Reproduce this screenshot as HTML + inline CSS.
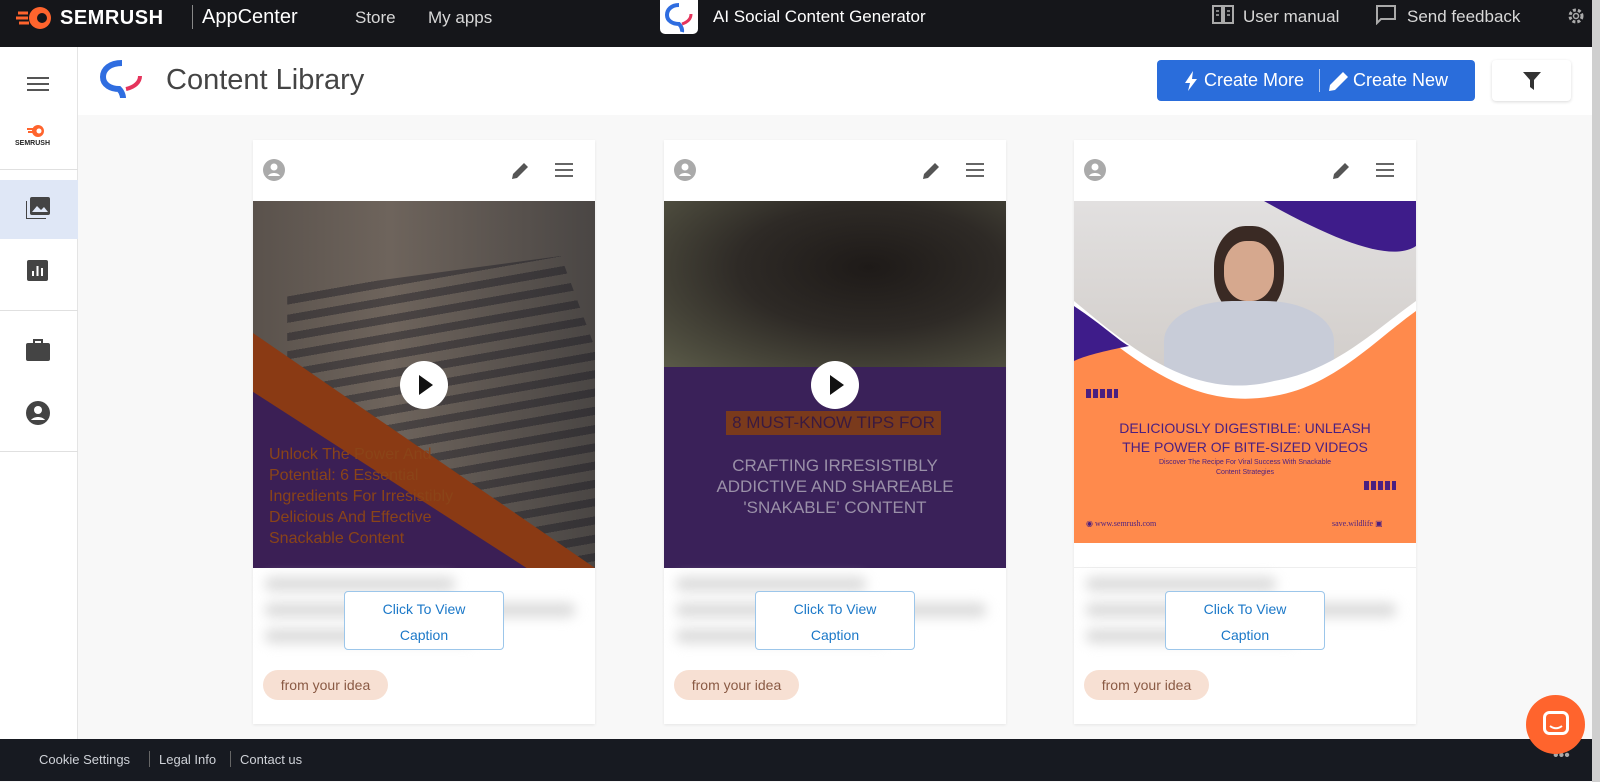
<!DOCTYPE html>
<html><head><meta charset="utf-8"><style>
*{box-sizing:border-box;margin:0;padding:0}
body{width:1600px;height:782px;overflow:hidden;background:#f8f8f8;font-family:"Liberation Sans",sans-serif;position:relative}
.abs{position:absolute}
.top{left:0;top:0;width:1600px;height:47px;background:#15161a;color:#d8d8d8}
.side{left:0;top:47px;width:78px;height:692px;background:#fff;border-right:1px solid #e4e4e4}
.hdr{left:78px;top:47px;width:1514px;height:68px;background:#fff}
.card{top:140px;width:342px;height:584px;background:#fff;box-shadow:0 1px 3px rgba(0,0,0,.08)}
.img{position:absolute;left:0;top:61px;width:342px;height:367px;overflow:hidden}
.btn{position:absolute;left:91px;top:451px;width:160px;height:59px;border:1px solid #9cc6ea;border-radius:4px;background:#fff;color:#1b78c8;font-size:14px;text-align:center;line-height:26px;padding-top:4px}
.chip{position:absolute;left:10px;top:530px;width:125px;height:30px;border-radius:15px;background:#f7e0d3;color:#8a5a44;font-size:14px;line-height:30px;text-align:center}
.blur{position:absolute;left:12px;height:14px;background:#dadada;filter:blur(6px);border-radius:6px}
.foot{left:0;top:739px;width:1592px;height:42px;background:#171a21;color:#cfd2d8;font-size:13px}
</style></head><body>
<div class="abs top">
 <svg class="abs" style="left:16px;top:5px" width="38" height="26" viewBox="0 0 38 26"><path d="M2 8h10M0 13h12M3 18h10" stroke="#ff642d" stroke-width="3"/><circle cx="24" cy="13" r="11" fill="#ff642d"/><circle cx="26" cy="13" r="5" fill="#15161a"/></svg>
 <div class="abs" style="left:60px;top:7px;font-size:20px;font-weight:bold;color:#fff;letter-spacing:.5px">SEMRUSH</div>
 <div class="abs" style="left:192px;top:5px;width:1px;height:24px;background:#888"></div>
 <div class="abs" style="left:202px;top:6px;font-size:20px;color:#fff">AppCenter</div>
 <div class="abs" style="left:355px;top:8px;font-size:17px">Store</div>
 <div class="abs" style="left:428px;top:8px;font-size:17px">My apps</div>
 <div class="abs" style="left:660px;top:0;width:38px;height:34px;background:#fff;border-radius:0 0 5px 5px"><svg width="38" height="34" viewBox="0 0 38 34"><path d="M19 5c-8 0-12 5-12 10 0 6 6 9 12 9 4 4 3 8 3 8" fill="none" stroke="#2f6de0" stroke-width="4"/><path d="M22 24c6-2 9-5 9-10" stroke="#e5345c" stroke-width="3" fill="none"/></svg></div>
 <div class="abs" style="left:713px;top:7px;font-size:17px;color:#fff">AI Social Content Generator</div>
 <svg class="abs" style="left:1212px;top:5px" width="22" height="20" viewBox="0 0 22 20"><path d="M1 1h9v17H1zM12 1h9v17h-9z" fill="none" stroke="#aaa" stroke-width="2"/><path d="M4 6h3M15 6h3M4 10h3M15 10h3" stroke="#aaa" stroke-width="1.5"/></svg>
 <div class="abs" style="left:1243px;top:7px;font-size:17px">User manual</div>
 <svg class="abs" style="left:1376px;top:5px" width="20" height="20" viewBox="0 0 20 20"><path d="M1 1h18v13H5l-4 4z" fill="none" stroke="#aaa" stroke-width="2"/></svg>
 <div class="abs" style="left:1407px;top:7px;font-size:17px">Send feedback</div>
 <svg class="abs" style="left:1566px;top:6px" width="20" height="20" viewBox="0 0 20 20"><circle cx="10" cy="10" r="6" fill="none" stroke="#aaa" stroke-width="3" stroke-dasharray="3 2"/><circle cx="10" cy="10" r="2.5" fill="none" stroke="#aaa" stroke-width="1.5"/></svg>
</div>
<div class="abs" style="left:1592px;top:0;width:8px;height:782px;background:#cfcfcf"></div>
<div class="abs side">
 <div class="abs" style="left:27px;top:30px;width:22px;height:2px;background:#555;box-shadow:0 6px #555,0 12px #555"></div>
 <svg class="abs" style="left:27px;top:78px" width="18" height="13" viewBox="0 0 18 13"><path d="M0 4h6M1 7h6" stroke="#ff642d" stroke-width="2"/><circle cx="11" cy="6" r="6" fill="#ff642d"/><circle cx="12" cy="6" r="2.5" fill="#fff"/></svg>
 <div class="abs" style="left:15px;top:93px;font-size:7px;font-weight:bold;color:#222">SEMRUSH</div>
 <div class="abs" style="left:0;top:122px;width:78px;height:1px;background:#e0e0e0"></div>
 <div class="abs" style="left:0;top:133px;width:78px;height:59px;background:#dfe7f6"></div>
 <svg class="abs" style="left:26px;top:150px" width="24" height="22" viewBox="0 0 24 22"><path d="M0 4v18h20" fill="none" stroke="#444" stroke-width="2"/><rect x="4" y="0" width="20" height="18" rx="2" fill="#444"/><path d="M6 15l5-6 4 4 3-3 4 5z" fill="#dfe7f6"/></svg>
 <svg class="abs" style="left:27px;top:213px" width="21" height="21" viewBox="0 0 21 21"><rect width="21" height="21" rx="2" fill="#444"/><path d="M6 16v-5M10.5 16V6M15 16v-8" stroke="#fff" stroke-width="2"/></svg>
 <div class="abs" style="left:0;top:263px;width:78px;height:1px;background:#e0e0e0"></div>
 <svg class="abs" style="left:26px;top:292px" width="24" height="22" viewBox="0 0 24 22"><path d="M8 4V1h8v3" fill="none" stroke="#444" stroke-width="2"/><rect y="4" width="24" height="18" rx="2" fill="#444"/></svg>
 <svg class="abs" style="left:26px;top:354px" width="24" height="24" viewBox="0 0 24 24"><circle cx="12" cy="12" r="12" fill="#444"/><circle cx="12" cy="9" r="4" fill="#fff"/><path d="M5 19c3-4 11-4 14 0" fill="#fff"/></svg>
 <div class="abs" style="left:0;top:404px;width:78px;height:1px;background:#e0e0e0"></div>
</div>
<div class="abs hdr">
 <svg class="abs" style="left:20px;top:12px" width="48" height="40" viewBox="0 0 48 40"><path d="M24 4C12 4 5 10 5 18c0 8 8 12 16 12 4 4 4 9 4 9" fill="none" stroke="#2f6de0" stroke-width="6"/><path d="M28 30c9-2 14-7 14-13" fill="none" stroke="#e5345c" stroke-width="4"/></svg>
 <div class="abs" style="left:88px;top:17px;font-size:29px;color:#444">Content Library</div>
 <div class="abs" style="left:1079px;top:13px;width:318px;height:41px;background:#2a6ddb;border-radius:4px;color:#fff;font-size:18px;line-height:41px">
  <svg class="abs" style="left:28px;top:11px" width="12" height="20" viewBox="0 0 12 20"><path d="M8 0L0 12h5l-2 8 9-12H7z" fill="#fff"/></svg><span class="abs" style="left:47px">Create More</span>
  <span class="abs" style="left:162px;top:9px;width:1px;height:23px;background:#a9c4f0"></span>
  <svg class="abs" style="left:172px;top:11px" width="20" height="20" viewBox="0 0 20 20"><path d="M0 20l1-6L14 1l5 5L6 19z" fill="#fff"/></svg><span class="abs" style="left:196px">Create New</span></div>
 <div class="abs" style="left:1414px;top:13px;width:79px;height:41px;background:#fff;border-radius:4px;box-shadow:0 1px 3px rgba(0,0,0,.15)"><svg class="abs" style="left:31px;top:12px" width="18" height="18" viewBox="0 0 18 18"><path d="M0 0h18L11 8v10l-4-3V8z" fill="#333"/></svg></div>
</div>

<div class="abs card" style="left:253px">
 <svg class="abs" style="left:10px;top:19px" width="22" height="22" viewBox="0 0 22 22"><circle cx="11" cy="11" r="11" fill="#aaa"/><circle cx="11" cy="8" r="3.5" fill="#fff"/><path d="M5 17c2-4 10-4 12 0" fill="#fff"/></svg>
 <svg class="abs" style="left:259px;top:21px" width="18" height="18" viewBox="0 0 18 18"><path d="M0 18l1-5L12 2l4 4L5 17z" fill="#555"/></svg>
 <div class="abs" style="left:302px;top:23px;width:18px;height:2px;background:#666;box-shadow:0 6px #666,0 12px #666"></div>
 <div class="img" style="background:linear-gradient(90deg,#5a524c,#6e645c 40%,#4a4644)">
  <div class="abs" style="left:0;top:0;width:342px;height:367px;background:repeating-linear-gradient(170deg,transparent 0 10px,rgba(20,20,30,.4) 10px 18px);clip-path:polygon(10% 25%,90% 15%,100% 40%,100% 100%,10% 100%)"></div>
  <div class="abs" style="left:0;top:0;width:342px;height:367px;background:#3b1f55;clip-path:polygon(0 42%,100% 100%,0 100%)"></div>
  <div class="abs" style="left:0;top:0;width:342px;height:367px;background:#8a3a14;clip-path:polygon(0 36%,0 52%,80% 100%,100% 100%)"></div>
  <div class="abs" style="left:16px;top:243px;font-size:16px;line-height:21px;color:#8a4418;width:230px">Unlock The Power And Potential: 6 Essential Ingredients For Irresistibly Delicious And Effective Snackable Content</div>
  <div class="abs" style="left:147px;top:160px;width:48px;height:48px;border-radius:50%;background:#fff"><div class="abs" style="left:19px;top:14px;border-left:14px solid #111;border-top:10px solid transparent;border-bottom:10px solid transparent"></div></div>
 </div>
 <div class="blur" style="top:437px;width:190px"></div><div class="blur" style="top:463px;width:310px"></div><div class="blur" style="top:489px;width:210px"></div>
 <div class="btn">Click To View<br>Caption</div><div class="chip">from your idea</div>
</div>

<div class="abs card" style="left:664px">
 <svg class="abs" style="left:10px;top:19px" width="22" height="22" viewBox="0 0 22 22"><circle cx="11" cy="11" r="11" fill="#aaa"/><circle cx="11" cy="8" r="3.5" fill="#fff"/><path d="M5 17c2-4 10-4 12 0" fill="#fff"/></svg>
 <svg class="abs" style="left:259px;top:21px" width="18" height="18" viewBox="0 0 18 18"><path d="M0 18l1-5L12 2l4 4L5 17z" fill="#555"/></svg>
 <div class="abs" style="left:302px;top:23px;width:18px;height:2px;background:#666;box-shadow:0 6px #666,0 12px #666"></div>
 <div class="img" style="background:#3a2159">
  <div class="abs" style="left:0;top:0;width:342px;height:166px;background:radial-gradient(ellipse at 60% 40%,#1e1a18,#2e2a26 45%,#5a5a48)"></div>
  <div class="abs" style="left:62px;top:210px;width:215px;height:24px;background:#7a3a1c;color:#3a1a40;font-size:17px;text-align:center;line-height:24px">8 MUST-KNOW TIPS FOR</div>
  <div class="abs" style="left:50px;top:254px;width:242px;font-size:17px;line-height:21px;color:#9a90a8;text-align:center">CRAFTING IRRESISTIBLY ADDICTIVE AND SHAREABLE 'SNAKABLE' CONTENT</div>
  <div class="abs" style="left:147px;top:160px;width:48px;height:48px;border-radius:50%;background:#fff"><div class="abs" style="left:19px;top:14px;border-left:14px solid #111;border-top:10px solid transparent;border-bottom:10px solid transparent"></div></div>
 </div>
 <div class="blur" style="top:437px;width:190px"></div><div class="blur" style="top:463px;width:310px"></div><div class="blur" style="top:489px;width:210px"></div>
 <div class="btn">Click To View<br>Caption</div><div class="chip">from your idea</div>
</div>

<div class="abs card" style="left:1074px">
 <svg class="abs" style="left:10px;top:19px" width="22" height="22" viewBox="0 0 22 22"><circle cx="11" cy="11" r="11" fill="#aaa"/><circle cx="11" cy="8" r="3.5" fill="#fff"/><path d="M5 17c2-4 10-4 12 0" fill="#fff"/></svg>
 <svg class="abs" style="left:259px;top:21px" width="18" height="18" viewBox="0 0 18 18"><path d="M0 18l1-5L12 2l4 4L5 17z" fill="#555"/></svg>
 <div class="abs" style="left:302px;top:23px;width:18px;height:2px;background:#666;box-shadow:0 6px #666,0 12px #666"></div>
 <div class="img" style="height:342px;background:#ff8a4c">
  <div class="abs" style="left:0;top:0;width:342px;height:200px;background:linear-gradient(180deg,#e2e0e0,#cfcac6)"></div>
  <div class="abs" style="left:140px;top:25px;width:70px;height:90px;border-radius:45%;background:#3a2a24"></div>
  <div class="abs" style="left:150px;top:40px;width:50px;height:60px;border-radius:45%;background:#d6a88e"></div>
  <div class="abs" style="left:90px;top:100px;width:170px;height:100px;border-radius:40% 40% 0 0;background:#c8ccd8"></div>
  <svg class="abs" style="left:0;top:0" width="342" height="342" viewBox="0 0 342 342"><path d="M190 0H342V45C320 60 270 45 190 0Z" fill="#3e1c8a"/><path d="M0 100C60 150 120 200 200 180C260 170 300 130 342 100V342H0Z" fill="#fff"/><path d="M0 110C60 160 120 210 200 195C260 185 300 140 342 110V342H0Z" fill="#ff8a4c"/><path d="M0 105C30 125 45 140 55 145C30 150 10 155 0 160Z" fill="#3e1c8a"/></svg>
  <div class="abs" style="left:0;top:218px;width:342px;text-align:center;font-size:14px;line-height:19px;color:#4a1f80">DELICIOUSLY DIGESTIBLE: UNLEASH<br>THE POWER OF BITE-SIZED VIDEOS</div>
  <div class="abs" style="left:0;top:257px;width:342px;text-align:center;font-size:7px;line-height:10px;color:#4a1f80">Discover The Recipe For Viral Success With Snackable<br>Content Strategies</div>
  <div class="abs" style="left:12px;top:188px;width:32px;height:9px;background:repeating-linear-gradient(90deg,#4a1f80 0 5px,transparent 5px 7px)"></div>
  <div class="abs" style="left:290px;top:280px;width:32px;height:9px;background:repeating-linear-gradient(90deg,#4a1f80 0 5px,transparent 5px 7px)"></div>
  <div class="abs" style="left:12px;top:318px;font-size:8px;color:#4a1f80;font-family:'Liberation Serif',serif">◉ www.semrush.com</div>
  <div class="abs" style="left:258px;top:318px;font-size:8px;color:#4a1f80;font-family:'Liberation Serif',serif">save.wildlife ▣</div>
 </div>
 <div class="abs" style="left:0;top:427px;width:342px;height:1px;background:#eee"></div>
 <div class="blur" style="top:437px;width:190px"></div><div class="blur" style="top:463px;width:310px"></div><div class="blur" style="top:489px;width:210px"></div>
 <div class="btn">Click To View<br>Caption</div><div class="chip">from your idea</div>
</div>

<div class="abs foot">
 <span class="abs" style="left:39px;top:13px">Cookie Settings</span>
 <span class="abs" style="left:149px;top:12px;width:1px;height:16px;background:#666"></span>
 <span class="abs" style="left:159px;top:13px">Legal Info</span>
 <span class="abs" style="left:230px;top:12px;width:1px;height:16px;background:#666"></span>
 <span class="abs" style="left:240px;top:13px">Contact us</span>
 <span class="abs" style="left:1553px;top:8px;font-size:16px;color:#aaa">•••</span>
</div>
<div class="abs" style="left:1526px;top:695px;width:59px;height:59px;border-radius:50%;background:#ff642d"><svg class="abs" style="left:17px;top:16px" width="26" height="26" viewBox="0 0 26 26"><rect x="1.5" y="1.5" width="23" height="21" rx="5" fill="none" stroke="#fff" stroke-width="3"/><path d="M7 15c4 3 8 3 12 0" fill="none" stroke="#fff" stroke-width="2"/></svg></div>
</body></html>
